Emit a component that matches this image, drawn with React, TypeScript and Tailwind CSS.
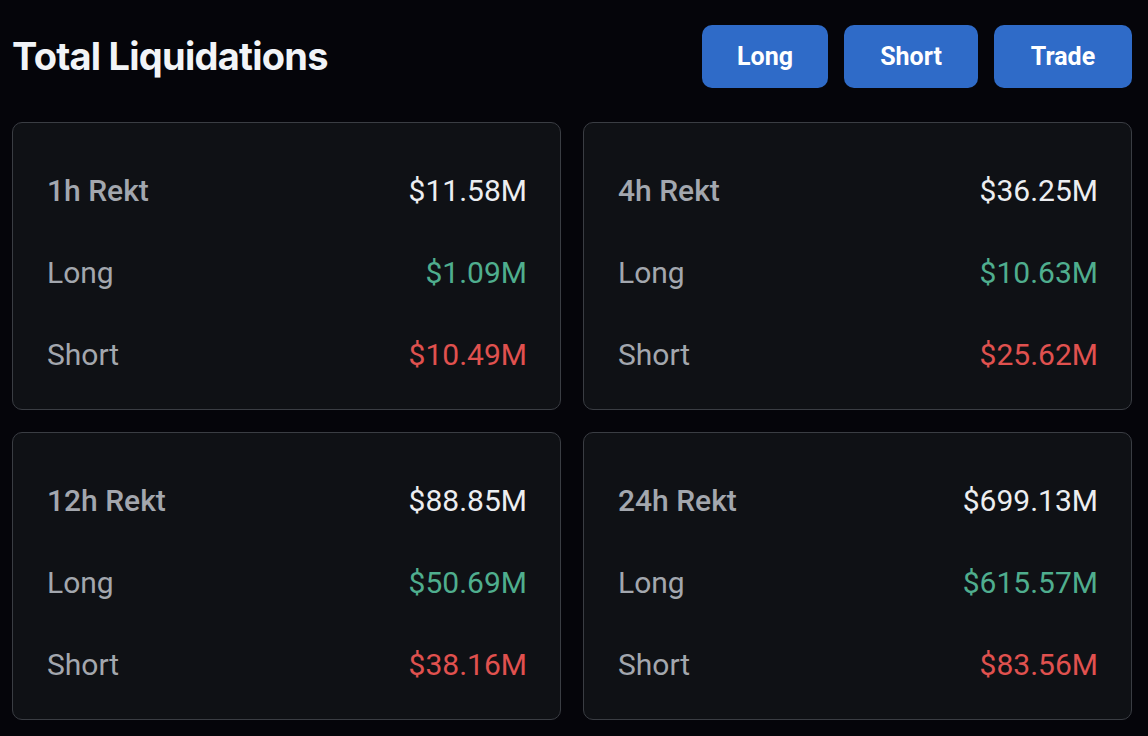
import React from "react";

type Card = { label: string; total: string; long: string; short: string };

const cards: Card[] = [
  { label: "1h Rekt", total: "$11.58M", long: "$1.09M", short: "$10.49M" },
  { label: "4h Rekt", total: "$36.25M", long: "$10.63M", short: "$25.62M" },
  { label: "12h Rekt", total: "$88.85M", long: "$50.69M", short: "$38.16M" },
  { label: "24h Rekt", total: "$699.13M", long: "$615.57M", short: "$83.56M" },
];

function StatCard({ c }: { c: Card }) {
  return (
    <div className="flex flex-col gap-[42px] rounded-[10px] border border-[#3a3d43] bg-[#0f1115] pl-[34px] pr-[33px] pt-[47px] pb-[35px]">
      <div className="flex h-[40px] items-center justify-between">
        <span className="font-medium text-[#a3a7ae]">{c.label}</span>
        <span className="text-[#eceef1]">{c.total}</span>
      </div>
      <div className="flex h-[40px] items-center justify-between">
        <span className="text-[#a3a7ae]">Long</span>
        <span className="text-[#4fae8e]">{c.long}</span>
      </div>
      <div className="flex h-[40px] items-center justify-between">
        <span className="text-[#a3a7ae]">Short</span>
        <span className="text-[#e0514f]">{c.short}</span>
      </div>
    </div>
  );
}

export default function App() {
  return (
    <div
      className="min-h-[736px] w-[1148px] bg-[#05050a] pl-[12px] pr-[16px] pt-[25px]"
      style={{ fontFamily: "Roboto, 'Noto Sans', sans-serif" }}
    >
      <div className="flex h-[63px] items-center justify-between">
        <h1
          className="text-[38px] font-bold tracking-[-0.02em] text-[#f2f4f7]"
          style={{ fontFamily: "Inter, sans-serif" }}
        >
          Total Liquidations
        </h1>
        <div className="flex gap-[16px] text-[25px] font-bold text-white">
          <button className="h-[63px] w-[126px] rounded-[10px] bg-[#2f6bc8]">Long</button>
          <button className="h-[63px] w-[134px] rounded-[10px] bg-[#2f6bc8]">Short</button>
          <button className="h-[63px] w-[138px] rounded-[10px] bg-[#2f6bc8]">Trade</button>
        </div>
      </div>
      <div className="mt-[34px] grid grid-cols-2 gap-[22px] text-[30px]">
        {cards.map((c) => (
          <StatCard key={c.label} c={c} />
        ))}
      </div>
    </div>
  );
}
